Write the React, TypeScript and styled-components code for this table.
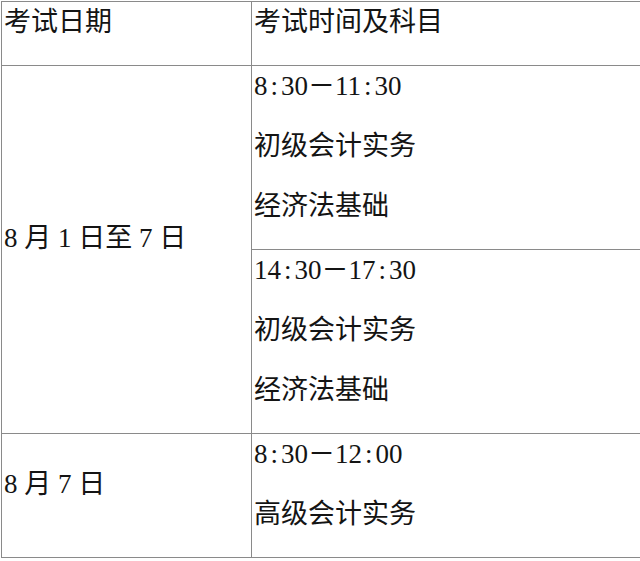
import React from "react";
import styled, { createGlobalStyle } from "styled-components";

const Global = createGlobalStyle`
  html, body {
    margin: 0;
    padding: 0;
    background: #ffffff;
    overflow: hidden;
  }
  body {
    font-family: "Liberation Serif", "Noto Sans CJK SC", serif;
    color: #141414;
  }
`;

const Page = styled.div`
  padding: 1px 0 0 1px;
  width: 640px;
  height: 561px;
  box-sizing: border-box;
  overflow: hidden;
`;

const Table = styled.table`
  border-collapse: collapse;
  table-layout: fixed;
  width: 680px;
  font-size: 27px;
`;

const Cell = styled.td<{ $middle?: boolean }>`
  border: 1px solid #8a8a8a;
  padding: 0 2px 3px 2px;
  vertical-align: ${(p) => (p.$middle ? "middle" : "top")};
  box-sizing: border-box;
`;

const Line = styled.p`
  margin: 0 0 20px 0;
  height: 40px;
  line-height: 40px;
  white-space: nowrap;
`;

const Colon = styled.span`
  display: inline-block;
  width: 0.5em;
  text-align: center;
`;

const Time: React.FC<{ value: string }> = ({ value }) => {
  const parts = value.split(":");
  return (
    <>
      {parts.map((p, i) => (
        <React.Fragment key={i}>
          {i > 0 && <Colon>:</Colon>}
          {p}
        </React.Fragment>
      ))}
    </>
  );
};

export default function App() {
  return (
    <>
      <Global />
      <Page>
        <Table>
          <colgroup>
            <col style={{ width: 250 }} />
            <col />
          </colgroup>
          <tbody>
            <tr>
              <Cell>
                <Line>考试日期</Line>
              </Cell>
              <Cell>
                <Line>考试时间及科目</Line>
              </Cell>
            </tr>
            <tr>
              <Cell $middle rowSpan={2}>
                <Line>8 月 1 日至 7 日</Line>
              </Cell>
              <Cell>
                <Line>
                  <Time value="8:30－11:30" />
                </Line>
                <Line>初级会计实务</Line>
                <Line>经济法基础</Line>
              </Cell>
            </tr>
            <tr>
              <Cell>
                <Line>
                  <Time value="14:30－17:30" />
                </Line>
                <Line>初级会计实务</Line>
                <Line>经济法基础</Line>
              </Cell>
            </tr>
            <tr>
              <Cell $middle>
                <Line>8 月 7 日</Line>
              </Cell>
              <Cell>
                <Line>
                  <Time value="8:30－12:00" />
                </Line>
                <Line>高级会计实务</Line>
              </Cell>
            </tr>
          </tbody>
        </Table>
      </Page>
    </>
  );
}
